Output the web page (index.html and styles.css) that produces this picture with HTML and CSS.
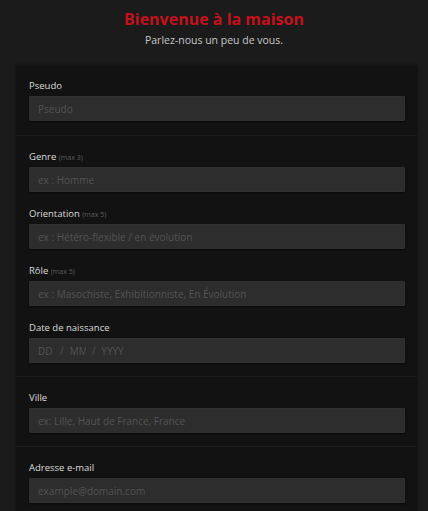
FILE: index.html
```html
<!DOCTYPE html>
<html>
<head>
    <meta charset="UTF-8">
    <title>Bienvenue à la maison</title>
    <link rel="stylesheet" href="styles.css">
</head>
<body>
    <div class="intro">
        <h1 class="intro-title">Bienvenue à la maison</h1>
        <p class="intro-text">Parlez-nous un peu de vous.</p>
    </div>

    <form class="profile-card">
        <div class="card-section">
            <div class="field">
                <label class="field-label" for="pseudo">Pseudo</label>
                <input class="field-input" type="text" id="pseudo" placeholder="Pseudo">
            </div>
        </div>

        <div class="card-section">
            <div class="field">
                <label class="field-label" for="genre">Genre <span class="field-hint">(max 3)</span></label>
                <input class="field-input" type="text" id="genre" placeholder="ex : Homme">
            </div>
            <div class="field">
                <label class="field-label" for="orientation">Orientation <span class="field-hint">(max 5)</span></label>
                <input class="field-input" type="text" id="orientation" placeholder="ex : Hétéro-flexible / en évolution">
            </div>
            <div class="field">
                <label class="field-label" for="role">Rôle <span class="field-hint">(max 5)</span></label>
                <input class="field-input" type="text" id="role" placeholder="ex : Masochiste, Exhibitionniste, En Évolution">
            </div>
            <div class="field">
                <label class="field-label" for="dobDay">Date de naissance</label>
                <div class="field-input date-input">
                    <input class="date-part" type="text" id="dobDay" placeholder="DD" size="2">
                    <span class="date-sep">/</span>
                    <input class="date-part" type="text" id="dobMonth" placeholder="MM" size="2">
                    <span class="date-sep">/</span>
                    <input class="date-part date-year" type="text" id="dobYear" placeholder="YYYY" size="4">
                </div>
            </div>
        </div>

        <div class="card-section">
            <div class="field">
                <label class="field-label" for="ville">Ville</label>
                <input class="field-input" type="text" id="ville" placeholder="ex: Lille, Haut de France, France">
            </div>
        </div>

        <div class="card-section">
            <div class="field">
                <label class="field-label" for="email">Adresse e-mail</label>
                <input class="field-input" type="email" id="email" placeholder="example@domain.com">
            </div>
        </div>
    </form>
</body>
</html>
```

FILE: styles.css
```css
body {
    font-family: "Open Sans", "DejaVu Sans", sans-serif;
    margin: 0;
    background-color: #1b1b1b;
    color: #ddd;
    overflow: hidden;
}

.intro {
    text-align: center;
    padding-top: 8px;
    padding-bottom: 18px;
}

.intro-title {
    margin: 0;
    font-size: 16px;
    line-height: 22px;
    font-weight: bold;
    color: #c4111b;
}

.intro-text {
    margin: 3px 0 0 0;
    font-size: 10.5px;
    line-height: 14px;
    color: #c8c8c8;
}

/* Card holding every group of fields */
.profile-card {
    margin: 0 11px 0 16px;
    background-color: #121212;
    box-shadow: 0 0 2px rgba(0, 0, 0, 0.6);
}

.card-section {
    padding: 14px 12px 13px 13px;
    border-top: 1px solid #1d1d1d;
}
.card-section:first-child {
    border-top: none;
    padding-bottom: 14px;
}

.field {
    margin-bottom: 15px;
}
.field:last-child {
    margin-bottom: 0;
}

.field-label {
    display: block;
    height: 14px;
    font-size: 9.5px;
    line-height: 14px;
    margin-bottom: 3px;
    color: #dcdcdc;
}

.field-hint {
    font-size: 7px;
    color: #5c5c5c;
}

.field-input {
    display: block;
    box-sizing: border-box;
    width: 100%;
    height: 25px;
    padding: 0 8px;
    background-color: #2d2d2d;
    border: 1px solid #303030;
    border-radius: 1px;
    box-shadow: 0 1px 2px rgba(0, 0, 0, 0.5);
    font-family: inherit;
    font-size: 10px;
    color: #ddd;
    outline: none;
}
.field-input::placeholder {
    color: #535353;
}

.date-input {
    display: flex;
    align-items: center;
    gap: 6px;
}

.date-part {
    padding: 0;
    width: 16px;
    background: transparent;
    border: none;
    font-family: inherit;
    font-size: 10px;
    color: #ddd;
    outline: none;
}
.date-part::placeholder {
    color: #535353;
}
.date-year {
    width: 30px;
}

.date-sep {
    font-size: 10px;
    color: #535353;
}
```
